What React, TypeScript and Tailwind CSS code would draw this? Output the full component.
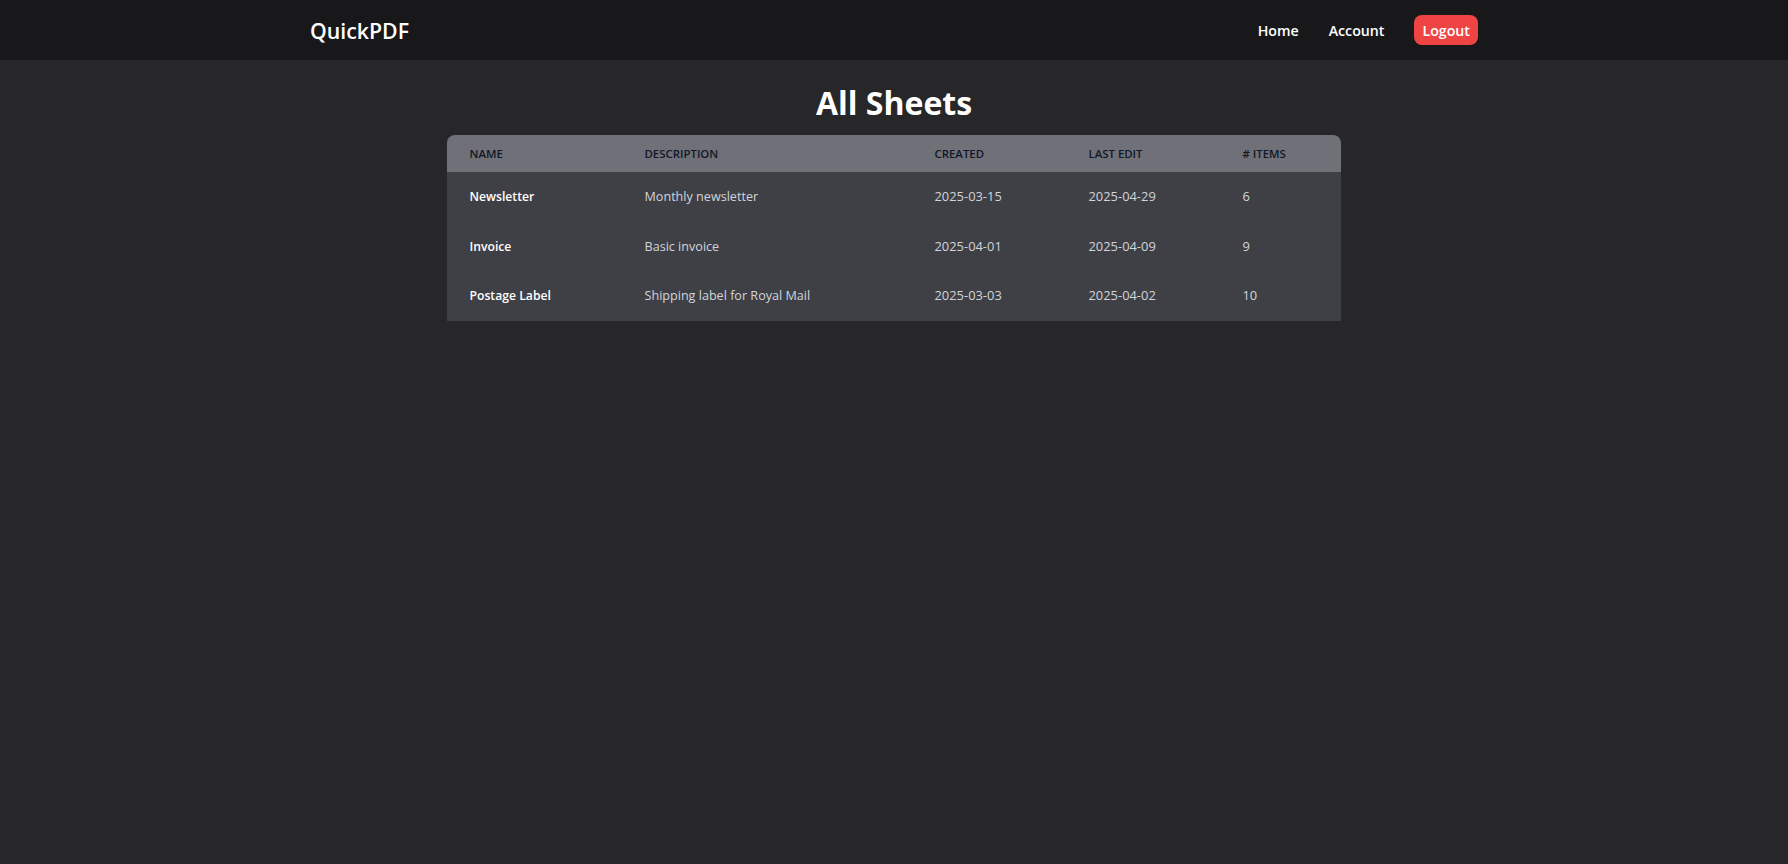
const sheets = [
  { name: "Newsletter", description: "Monthly newsletter", created: "2025-03-15", lastEdit: "2025-04-29", items: 6 },
  { name: "Invoice", description: "Basic invoice", created: "2025-04-01", lastEdit: "2025-04-09", items: 9 },
  { name: "Postage Label", description: "Shipping label for Royal Mail", created: "2025-03-03", lastEdit: "2025-04-02", items: 10 },
]

export default function App() {
  return (
    <div className="min-h-screen bg-[#27272a] font-['Open_Sans',sans-serif] text-white">
      <nav className="h-[60px] bg-[#18181b]">
        <div className="mx-auto flex h-full max-w-7xl items-center justify-between px-14">
          <span className="pt-[2px] text-[21.3px] font-semibold">QuickPDF</span>
          <div className="flex items-center gap-[30px] text-[14.2px] font-semibold">
            <a className="pt-[1px]">Home</a>
            <a className="pt-[1px]">Account</a>
            <button className="h-[30px] rounded-lg bg-[#ef4444] px-2 pt-[1px]">Logout</button>
          </div>
        </div>
      </nav>
      <main className="mx-auto max-w-[894px]">
        <h1 className="pt-[19px] pb-[8px] text-center text-[32px] leading-[48px] font-bold">All Sheets</h1>
        <div className="overflow-hidden rounded-t-lg">
          <table className="w-full table-fixed text-left text-[12.6px] leading-5">
            <thead className="bg-[#6f7078]">
              <tr className="h-[37px] text-[11.4px] text-[#111827] uppercase">
                <th className="w-[174px] pl-[22.5px] font-semibold">Name</th>
                <th className="w-[290px] pl-[23.5px] font-semibold">Description</th>
                <th className="w-[154px] pl-[23.5px] font-semibold">Created</th>
                <th className="w-[154px] pl-[23.5px] font-semibold">Last Edit</th>
                <th className="pl-[23.5px] font-semibold"># Items</th>
              </tr>
            </thead>
            <tbody className="bg-[#3f4046] text-[#d1d5db]">
              {sheets.map((sheet) => (
                <tr key={sheet.name} className="h-[49.5px]">
                  <td className="pt-[1px] pl-[22.5px] text-[12.2px] font-semibold text-white">{sheet.name}</td>
                  <td className="pt-[1px] pl-[23.5px]">{sheet.description}</td>
                  <td className="pb-[1px] pl-[23.5px] text-[12.9px]">{sheet.created}</td>
                  <td className="pb-[1px] pl-[23.5px] text-[12.9px]">{sheet.lastEdit}</td>
                  <td className="pb-[1px] pl-[23.5px] text-[12.9px]">{sheet.items}</td>
                </tr>
              ))}
            </tbody>
          </table>
        </div>
      </main>
    </div>
  )
}
